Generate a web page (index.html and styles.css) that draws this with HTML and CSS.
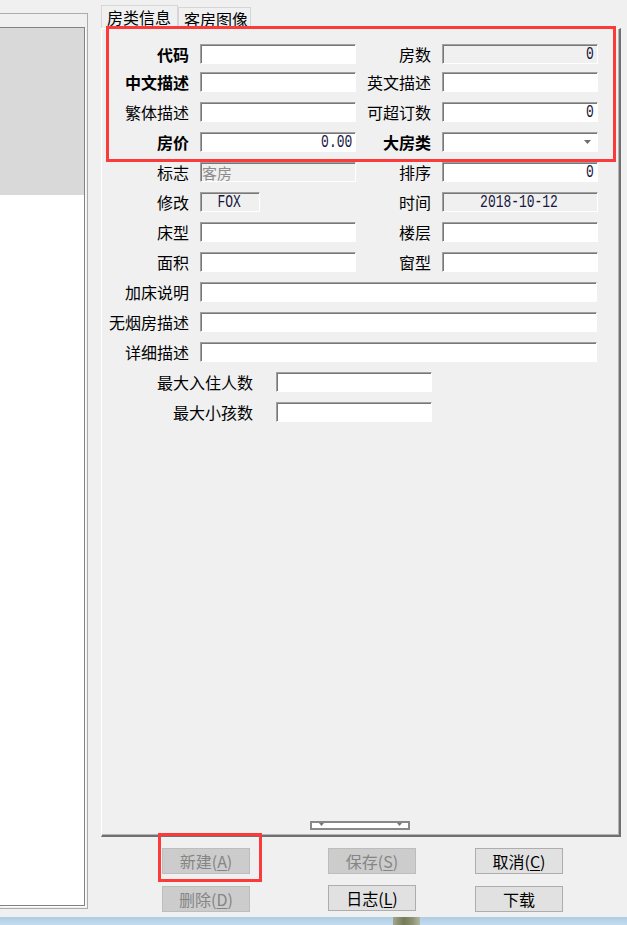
FILE: index.html
```html
<!DOCTYPE html>
<html lang="zh-CN">
<head>
<meta charset="utf-8">
<title>房类信息</title>
<link rel="stylesheet" href="styles.css">
</head>
<body>
<div class="screen">
  <div class="main">
    <div class="leftpanel">
      <div class="leftinner"><div class="leftgray"></div></div>
    </div>
    <div class="right">
      <div class="tabs">
        <div class="tab active">房类信息</div>
        <div class="tab">客房图像</div>
      </div>
      <div class="panel">
        <div class="form">
          <div class="row first">
            <div class="lbl b">代码</div><div class="inp"></div>
            <div class="lbl2">房数</div><div class="inp dis num"><span class="t">0</span></div>
          </div>
          <div class="row">
            <div class="lbl b">中文描述</div><div class="inp"></div>
            <div class="lbl2">英文描述</div><div class="inp"></div>
          </div>
          <div class="row">
            <div class="lbl">繁体描述</div><div class="inp"></div>
            <div class="lbl2">可超订数</div><div class="inp num"><span class="t">0</span></div>
          </div>
          <div class="row">
            <div class="lbl b">房价</div><div class="inp num"><span class="t">0.00</span></div>
            <div class="lbl2 b">大房类</div>
            <div class="inp combo"><svg class="arrow" width="7" height="4" viewBox="0 0 7 4"><polygon points="0,0 7,0 3.5,4" fill="#6d6d6d"/></svg></div>
          </div>
          <div class="row">
            <div class="lbl">标志</div><div class="inp dis gray">客房</div>
            <div class="lbl2">排序</div><div class="inp num"><span class="t">0</span></div>
          </div>
          <div class="row">
            <div class="lbl">修改</div><div class="inp dis short center"><span class="t">FOX</span></div>
            <div class="lbl2">时间</div><div class="inp dis center"><span class="t">2018-10-12</span></div>
          </div>
          <div class="row">
            <div class="lbl">床型</div><div class="inp"></div>
            <div class="lbl2">楼层</div><div class="inp"></div>
          </div>
          <div class="row">
            <div class="lbl">面积</div><div class="inp"></div>
            <div class="lbl2">窗型</div><div class="inp"></div>
          </div>
          <div class="row">
            <div class="lbl">加床说明</div><div class="inp wide"></div>
          </div>
          <div class="row">
            <div class="lbl">无烟房描述</div><div class="inp wide"></div>
          </div>
          <div class="row">
            <div class="lbl">详细描述</div><div class="inp wide"></div>
          </div>
          <div class="row">
            <div class="lbl long">最大入住人数</div><div class="inp"></div>
          </div>
          <div class="row">
            <div class="lbl long">最大小孩数</div><div class="inp"></div>
          </div>
        </div>
        <div class="splitter">
          <svg class="tri" width="5" height="3" viewBox="0 0 5 3"><polygon points="0,0 5,0 2.5,3" fill="#777"/></svg>
          <svg class="tri" width="5" height="3" viewBox="0 0 5 3"><polygon points="0,0 5,0 2.5,3" fill="#777"/></svg>
        </div>
      </div>
      <div class="btns">
        <div class="col">
          <div class="btn disabled">新建(<u>A</u>)</div>
          <div class="btn disabled">删除(<u>D</u>)</div>
        </div>
        <div class="col c2">
          <div class="btn disabled">保存(<u>S</u>)</div>
          <div class="btn">日志(<u>L</u>)</div>
        </div>
        <div class="col c3">
          <div class="btn">取消(<u>C</u>)</div>
          <div class="btn">下载</div>
        </div>
      </div>
    </div>
  </div>
  <div class="taskbar"><div class="blob"></div></div>
  <div class="hl hl1"></div>
  <div class="hl hl2"></div>
</div>
</body>
</html>
```

FILE: styles.css
```css
html, body {
  margin: 0;
  padding: 0;
  background: #f0f0f0;
}
body {
  font-family: "Noto Sans CJK SC", "Noto Sans", sans-serif;
  font-size: 16px;
  color: #000;
}
.screen {
  position: relative;
  width: 627px;
  height: 925px;
  overflow: hidden;
  background: #f0f0f0;
}
.main {
  display: flex;
  height: 917px;
}

/* left list panel */
.leftpanel {
  width: 88px;
  height: 896px;
  margin-top: 13px;
  box-sizing: border-box;
  border: 1px solid #acacac;
  border-left: none;
  padding: 13px 2px 2px 0;
  display: flex;
}
.leftinner {
  flex: 1;
  border: 1px solid #828282;
  border-left: none;
  background: #fff;
  box-shadow: 1px 1px 0 #fdfdfd;
}
.leftgray {
  height: 167px;
  background: #d9d9d9;
}

/* right side */
.right {
  margin-left: 13px;
  width: 520px;
  display: flex;
  flex-direction: column;
}
.tabs {
  height: 23px;
  margin-top: 5px;
  display: flex;
  align-items: flex-end;
}
.tab {
  box-sizing: border-box;
  border: 1px solid #d6d6d6;
  border-bottom: none;
  padding-left: 5px;
  line-height: 20px;
  white-space: nowrap;
}
.tab.active {
  width: 77px;
  height: 23px;
  padding-top: 1px;
  background: #f0f0f0;
}
.tab:not(.active) {
  width: 73px;
  height: 21px;
  padding-top: 1px;
}
.panel {
  height: 809px;
  box-sizing: border-box;
  border-top: 1px solid #fff;
  border-left: 1px solid #fff;
  border-right: 2px solid #707070;
  border-bottom: 2px solid #707070;
  box-shadow: inset -1px -1px 0 #b4b4b4;
  display: flex;
  flex-direction: column;
}
.form {
  padding-top: 10px;
  display: flex;
  flex-direction: column;
}
.row {
  height: 30px;
  display: flex;
  align-items: center;
}
.row.first {
  margin-bottom: -2px;
}
.lbl, .lbl2 {
  text-align: right;
  line-height: 20px;
  white-space: nowrap;
  margin-right: 11px;
}
.lbl { width: 87px; }
.lbl.long { width: 151px; margin-right: 23px; }
.lbl2 { width: 75px; }
.b { font-weight: 700; }

.inp {
  box-sizing: border-box;
  width: 156px;
  height: 20px;
  border-style: solid;
  border-width: 1px;
  border-color: #a0a0a0 #fff #fff #a0a0a0;
  box-shadow: inset 1px 1px 0 #787878;
  background: #fff;
  display: flex;
  align-items: center;
  font-family: "Liberation Mono", "DejaVu Sans Mono", monospace;
  font-size: 18px;
  line-height: 18px;
  color: #16163e;
  padding: 0 3px 0 2px;
  white-space: nowrap;
  overflow: hidden;
}
.inp .t {
  display: inline-block;
  transform: scaleX(0.72);
  transform-origin: center center;
}
.inp.num .t { transform-origin: right center; }
.inp.dis { background: #f0f0f0; }
.inp.num { justify-content: flex-end; }
.inp.center { justify-content: center; }
.inp.short { width: 60px; margin-right: 96px; }
.inp.wide { width: 397px; }
.inp.gray {
  font-family: "Noto Sans CJK SC", sans-serif;
  font-size: 15px;
  line-height: 17px;
  color: #8c8c8c;
  padding-left: 1px;
}
.inp.combo {
  justify-content: flex-end;
  padding-right: 6px;
}
.arrow { display: block; }

/* small collapsed splitter at the panel bottom */
.splitter {
  margin-top: auto;
  margin-left: 208px;
  margin-bottom: 5px;
  width: 100px;
  height: 9px;
  box-sizing: border-box;
  border: 2px solid #888;
  background: #fff;
  display: flex;
  justify-content: space-between;
  align-items: flex-start;
  padding: 0 6px 0 7px;
}
.tri { display: block; }

/* buttons */
.btns {
  display: flex;
  padding: 11px 0 0 61px;
}
.col {
  display: flex;
  flex-direction: column;
  gap: 12px;
}
.col.c2 { margin-left: 78px; gap: 11px; }
.col.c3 { margin-left: 59px; }
.btn {
  box-sizing: border-box;
  width: 88px;
  height: 26px;
  border: 1px solid #adadad;
  background: #e1e1e1;
  display: flex;
  align-items: center;
  justify-content: center;
  line-height: 20px;
  white-space: nowrap;
}
.btn.disabled {
  background: #cccccc;
  border-color: #bdbdbd;
  color: #858585;
}
.btn u { text-decoration: underline; text-underline-offset: 2px; }

/* desktop taskbar sliver */
.taskbar {
  height: 8px;
  background: linear-gradient(#afcde4, #c4dbec);
  display: flex;
}
.blob {
  margin-left: 393px;
  width: 27px;
  background: linear-gradient(to right, #a4a78c, #747a5a 40%, #8a9070 70%, #b0b8a8);
}

/* red highlight overlays */
.hl {
  position: absolute;
  box-sizing: border-box;
  border: 3px solid #fb3a3a;
  pointer-events: none;
}
.hl1 { left: 106px; top: 26px; width: 510px; height: 136px; }
.hl2 { left: 158px; top: 833px; width: 104px; height: 49px; }
```
